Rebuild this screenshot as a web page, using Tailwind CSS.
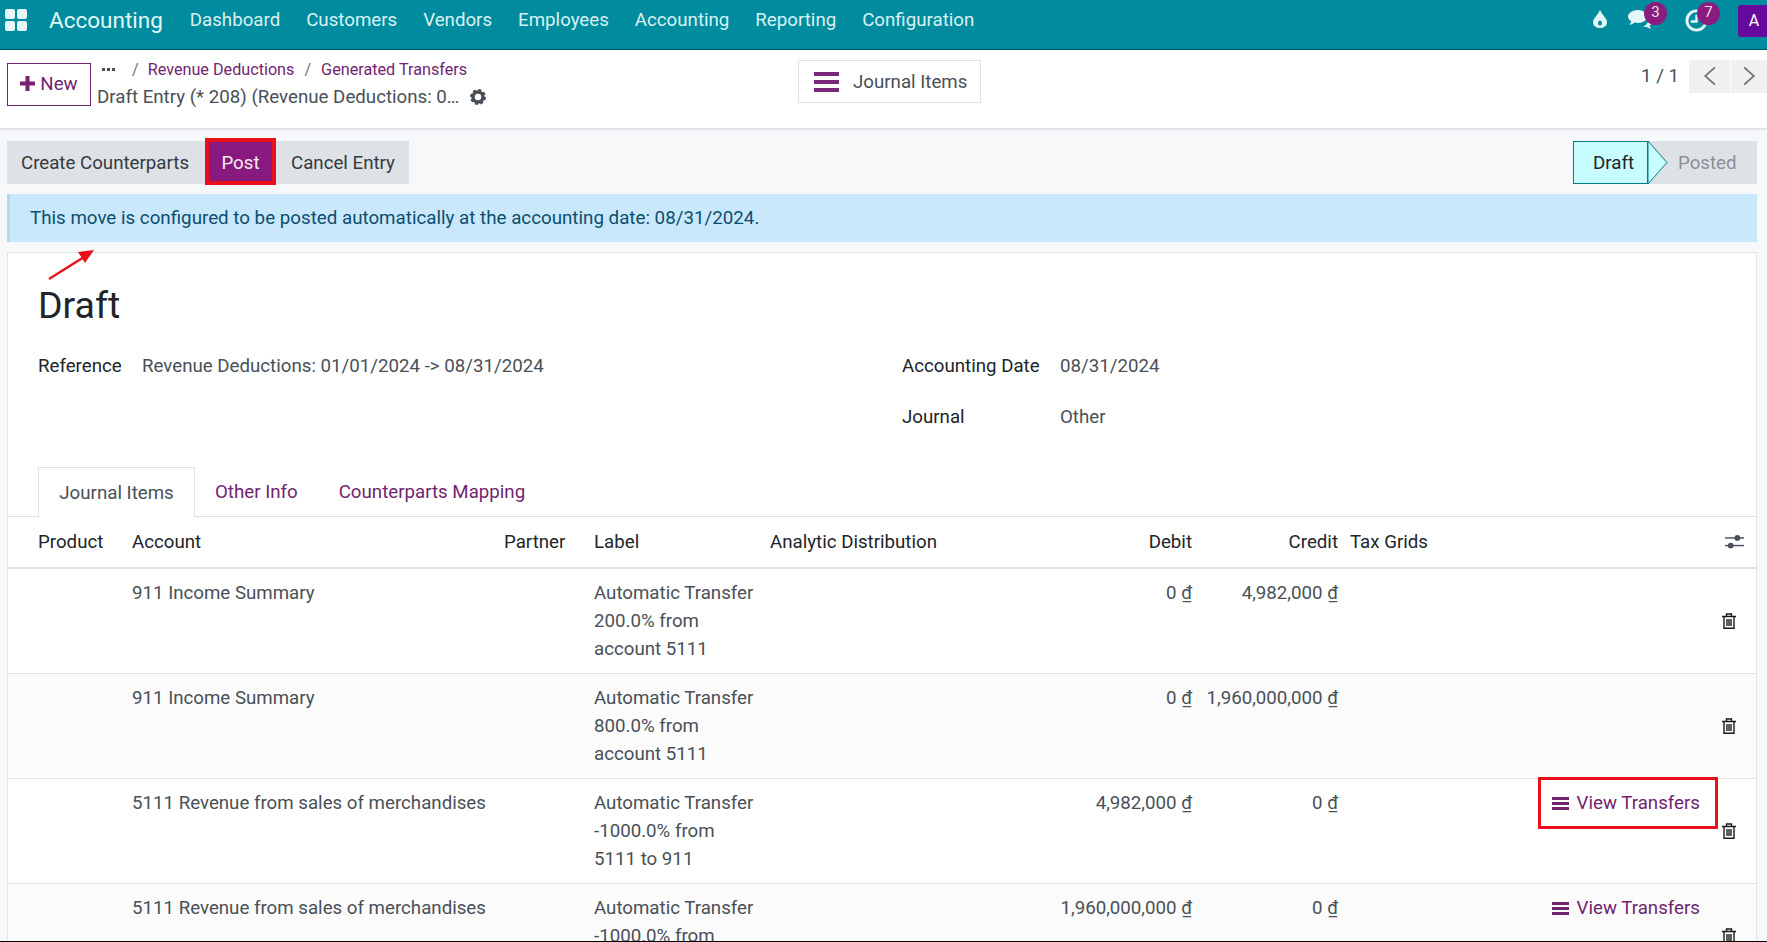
<!DOCTYPE html>
<html lang="en">
  <head>
    <meta charset="UTF-8" />
    <title>Draft Entry</title>
    <script src="https://cdn.jsdelivr.net/npm/@tailwindcss/browser@4"></script>
  </head>
  <body class="m-0 bg-[#f7f8fa]">
    <div class="relative h-[942px] w-[1767px] overflow-hidden border-b border-black font-['Roboto',sans-serif] text-[18.7px] leading-[28px] text-[#495057]">
      <!-- top nav -->
      <header class="flex h-[50px] items-start border-b border-[#00565f] bg-[#008c9e] text-white/90">
        <svg class="ml-[5px] mt-[9px] h-[22px] w-[22px]" viewBox="0 0 22 22" fill="#e3f7f8">
          <rect x="0" y="0" width="10" height="10" rx="2" /><rect x="12" y="0" width="10" height="10" rx="2" />
          <rect x="0" y="12" width="10" height="10" rx="2" /><rect x="12" y="12" width="10" height="10" rx="2" />
        </svg>
        <div class="ml-[22px] mt-[4px] text-[22.5px] leading-[32px] text-[#e3f7f8]">Accounting</div>
        <nav class="ml-[14px] mt-[6px] flex text-[#d9f1f3]">
          <a class="px-[13px]">Dashboard</a>
          <a class="px-[13px]">Customers</a>
          <a class="px-[13px]">Vendors</a>
          <a class="px-[13px]">Employees</a>
          <a class="px-[13px]">Accounting</a>
          <a class="px-[13px]">Reporting</a>
          <a class="px-[13px]">Configuration</a>
        </nav>
        <div class="relative ml-auto flex h-[49px] w-[175px] items-start">
          <svg class="ml-px mt-[10px] h-[18px] w-[14px]" viewBox="0 0 14 18" fill="#e3f7f8">
            <path fill-rule="evenodd" d="M7 0C9 5 14 8 14 12.5A7 5.500 0 0 1 0 12.500C0 8 5 5 7 0ZM7 10.500A2 2.500 0 1 0 7 15.500A2 2.500 0 1 0 7 10.500Z" />
          </svg>
          <svg class="ml-[21px] mt-[10px] h-[20px] w-[24px]" viewBox="0 0 24 20" fill="#e3f7f8">
            <path d="M10 0C15.500 0 19 3 19 6.500S15.500 13 10 13C8.800 13 7.800 12.900 6.800 12.600C5.500 13.800 3.500 14.800 1 15C2.300 13.700 3 12.500 3.200 11.300C1.200 10 0 8.400 0 6.500C0 3 4.500 0 10 0Z" />
            <path d="M20.500 7.500C22.600 8.500 24 10 24 12C24 13.500 23 14.800 21.500 15.700C21.700 16.800 22.500 17.800 23.500 18.800C21.500 18.600 19.800 17.700 18.700 16.800C17.500 17 16 17 14.800 16.600C18 15.800 20.800 12.800 20.500 7.500Z" />
          </svg>
          <span class="absolute left-[52px] top-[2px] flex h-[23px] w-[23px] items-center justify-center rounded-full bg-[#8a1c7e] pb-[3px] text-[15px] leading-none text-[#f0dcec]">3</span>
          <svg class="ml-[33px] mt-[9px] h-[23px] w-[23px]" viewBox="0 0 24 24" fill="none" stroke="#e3f7f8" stroke-width="3">
            <circle cx="12" cy="12" r="10" />
            <path d="M12 6V13H6" stroke-width="2.500" />
          </svg>
          <span class="absolute left-[105px] top-[2px] flex h-[23px] w-[23px] items-center justify-center rounded-full bg-[#8a1c7e] pb-[3px] text-[15px] leading-none text-[#f0dcec]">7</span>
          <span class="absolute left-[146px] top-[5px] flex h-[32px] w-[32px] items-center justify-center rounded-[3px] bg-[#650a9c] text-[16px] leading-none text-white">A</span>
        </div>
      </header>

      <!-- control panel -->
      <section class="relative flex h-[80px] border-b-2 border-[#e1e3e6] bg-white">
        <button class="ml-[7px] mt-[13px] flex h-[43px] w-[84px] items-center justify-center gap-[5px] border border-[#71256f] pb-[2px] text-[#71256f]">
          <svg class="h-[15px] w-[15px]" viewBox="0 0 15 15" fill="#7a1f73"><path d="M5.500 0H9.500V5.500H15V9.500H9.500V15H5.500V9.500H0V5.500H5.500Z" /></svg>
          New
        </button>
        <div class="ml-[6px] mt-[5px]">
          <div class="flex h-[28px] items-center pt-px text-[16.2px] text-[#71256f]">
            <span class="ml-[5px] flex w-[13px] gap-[2px]"><i class="h-[3px] w-[3px] bg-[#495057]"></i><i class="h-[3px] w-[3px] bg-[#495057]"></i><i class="h-[3px] w-[3px] bg-[#495057]"></i></span>
            <span class="ml-[17px] mr-[9px] text-[#6c757d]">/</span>
            <span>Revenue Deductions</span>
            <span class="mx-[10px] text-[#6c757d]">/</span>
            <span>Generated Transfers</span>
          </div>
          <div class="flex h-[28px] items-center">
            <span>Draft Entry (* 208) (Revenue Deductions: 0…</span>
            <svg class="ml-[11px] h-[16px] w-[16px]" viewBox="0 0 16 16">
              <circle cx="8" cy="8" r="5" fill="none" stroke="#495057" stroke-width="3.500" />
              <circle cx="8" cy="8" r="6.800" fill="none" stroke="#495057" stroke-width="2.400" stroke-dasharray="3 2.340" />
            </svg>
          </div>
        </div>
        <button class="absolute left-[798px] top-[10px] flex h-[43px] w-[183px] items-center border border-[#dee2e6] pl-[15px]">
          <span class="flex w-[25px] flex-col gap-[4px]"><i class="h-[4px] bg-[#7a2877]"></i><i class="h-[4px] bg-[#7a2877]"></i><i class="h-[4px] bg-[#7a2877]"></i></span>
          <span class="ml-[14px]">Journal Items</span>
        </button>
        <div class="ml-auto mt-[9px] flex h-[33px] items-center">
          <span class="mr-[10px]">1 / 1</span>
          <button class="mt-px flex h-[33px] w-[41px] items-center justify-center bg-[#f0f0f1]">
            <svg class="h-[20px] w-[13px]" viewBox="0 0 12 18" fill="none" stroke="#6c757d" stroke-width="1.600"><path d="M11 1L2 9L11 17" /></svg>
          </button>
          <button class="ml-px mt-px flex h-[33px] w-[36px] items-center justify-center bg-[#f0f0f1]">
            <svg class="h-[20px] w-[13px]" viewBox="0 0 12 18" fill="none" stroke="#6c757d" stroke-width="1.600"><path d="M1 1L10 9L1 17" /></svg>
          </button>
        </div>
      </section>

      <!-- action bar -->
      <div class="mt-[11px] flex h-[43px] justify-between pl-[7px] pr-[10px]">
        <div class="flex bg-[#dee2e6] text-[#343a40]">
          <button class="w-[199px] pr-[3px] text-center">Create Counterparts</button>
          <button class="relative w-[69px] border border-white bg-[#881a7f] text-[#f6eaf5]">
            Post
            <span class="absolute -bottom-[2px] -left-[2px] -right-[2px] -top-[4px] border-[4px] border-[#e8101a]"></span>
          </button>
          <button class="w-[134px] pl-[2px] text-center">Cancel Entry</button>
        </div>
        <div class="relative flex h-[43px] w-[184px] bg-[#dee2e6]">
          <div class="flex w-[75px] items-center justify-center border border-[#017e84] bg-[#c8fdff] pl-[6px] text-[#212529]">Draft</div>
          <svg class="h-[43px] w-[20px]" viewBox="0 0 20 43"><path d="M0 0L19 21.500L0 43Z" fill="#c8fdff" stroke="#017e84" /></svg>
          <span class="ml-[10px] self-center text-[#8a9097]">Posted</span>
        </div>
      </div>

      <!-- alert -->
      <div class="ml-[7px] mr-[10px] mt-[10px] flex h-[48px] items-center border-l-[3px] border-[#b2d9ec] bg-[#c9e8fb] pl-[20px] text-[18.76px] text-[#0d4e6f]">
        This move is configured to be posted automatically at the accounting date: 08/31/2024.
      </div>

      <!-- form sheet -->
      <main class="ml-[7px] mr-[10px] mt-[10px] border border-[#e1e3e6] bg-white">
        <h1 class="ml-[30px] mt-[30px] text-[37.5px] leading-[44px] text-[#212529]">Draft</h1>
        <div class="mt-[25px] grid grid-cols-[864px_1fr] pl-[30px]">
          <div class="flex">
            <span class="w-[104px] text-[#212529]">Reference</span>
            <span>Revenue Deductions: 01/01/2024 -&gt; 08/31/2024</span>
          </div>
          <div>
            <div class="flex">
              <span class="w-[158px] text-[#212529]">Accounting Date</span>
              <span>08/31/2024</span>
            </div>
            <div class="mt-[23px] flex">
              <span class="w-[158px] text-[#212529]">Journal</span>
              <span>Other</span>
            </div>
          </div>
        </div>

        <div class="mt-[36px] flex h-[50px] border-b border-[#dee2e6] pl-[30px]">
          <a class="flex h-[50px] w-[157px] items-center justify-center border border-b-0 border-[#dee2e6] bg-white">Journal Items</a>
          <a class="ml-[20px] flex items-center text-[#71256f]">Other Info</a>
          <a class="ml-[41px] flex items-center text-[#71256f]">Counterparts Mapping</a>
        </div>

        <table class="w-full table-fixed border-collapse">
          <colgroup>
            <col class="w-[119px]" /><col class="w-[372px]" /><col class="w-[90px]" /><col class="w-[176px]" />
            <col class="w-[286px]" /><col class="w-[146px]" /><col class="w-[146px]" /><col class="w-[187px]" /><col class="w-[187px]" /><col />
          </colgroup>
          <thead class="text-[#212529]">
            <tr class="h-[51px] border-b-2 border-[#dfe1e6] text-left">
              <th class="pl-[30px] font-normal">Product</th>
              <th class="px-[5px] font-normal">Account</th>
              <th class="px-[5px] font-normal">Partner</th>
              <th class="px-[5px] font-normal">Label</th>
              <th class="px-[5px] font-normal">Analytic Distribution</th>
              <th class="px-[5px] text-right font-normal">Debit</th>
              <th class="px-[5px] text-right font-normal">Credit</th>
              <th class="pl-[7px] font-normal">Tax Grids</th>
              <th colspan="2" class="font-normal">
                <svg class="ml-auto mr-[12px] h-[16px] w-[19px]" viewBox="0 0 20 16" fill="#495057">
                  <rect x="0" y="3" width="20" height="1.500" /><rect x="0" y="11" width="20" height="1.500" />
                  <circle cx="13" cy="3.700" r="3" /><circle cx="6" cy="11.700" r="3" />
                </svg>
              </th>
            </tr>
          </thead>
          <tbody class="align-top">
            <tr class="border-b border-[#dee2e6]">
              <td class="py-[10px]"></td>
              <td class="px-[5px] py-[10px]">911 Income Summary</td>
              <td></td>
              <td class="px-[5px] py-[10px]">Automatic Transfer<br />200.0% from<br />account 5111</td>
              <td></td>
              <td class="px-[5px] py-[10px] text-right">0 ₫</td>
              <td class="px-[5px] py-[10px] text-right">4,982,000 ₫</td>
              <td colspan="2"></td>
              <td class="align-middle">
                <svg class="ml-[5px] h-[16px] w-[14px]" viewBox="0 0 14 16" fill="none" stroke="#1a1a1a" stroke-width="1.400"><path d="M0 3.500H14M4.500 3.500V1H9.500V3.500M2 3.500V15.300H12V3.500M5 6V13M7 6V13M9 6V13" /></svg>
              </td>
            </tr>
            <tr class="border-b border-[#dee2e6] bg-[#fbfbfc]">
              <td class="py-[10px]"></td>
              <td class="px-[5px] py-[10px]">911 Income Summary</td>
              <td></td>
              <td class="px-[5px] py-[10px]">Automatic Transfer<br />800.0% from<br />account 5111</td>
              <td></td>
              <td class="px-[5px] py-[10px] text-right">0 ₫</td>
              <td class="px-[5px] py-[10px] text-right">1,960,000,000 ₫</td>
              <td colspan="2"></td>
              <td class="align-middle">
                <svg class="ml-[5px] h-[16px] w-[14px]" viewBox="0 0 14 16" fill="none" stroke="#1a1a1a" stroke-width="1.400"><path d="M0 3.500H14M4.500 3.500V1H9.500V3.500M2 3.500V15.300H12V3.500M5 6V13M7 6V13M9 6V13" /></svg>
              </td>
            </tr>
            <tr class="border-b border-[#dee2e6]">
              <td class="py-[10px]"></td>
              <td class="px-[5px] py-[10px]">5111 Revenue from sales of merchandises</td>
              <td></td>
              <td class="px-[5px] py-[10px]">Automatic Transfer<br />-1000.0% from<br />5111 to 911</td>
              <td></td>
              <td class="px-[5px] py-[10px] text-right">4,982,000 ₫</td>
              <td class="px-[5px] py-[10px] text-right">0 ₫</td>
              <td></td>
              <td class="py-[10px] pr-[17px] text-right text-[#71256f]">
                <span class="relative inline-flex items-center gap-[8px] align-top">
                  <span class="flex w-[17px] flex-col gap-[2px]"><i class="h-[3px] bg-[#71256f]"></i><i class="h-[3px] bg-[#71256f]"></i><i class="h-[3px] bg-[#71256f]"></i></span>
                  View Transfers
                  <span class="absolute -bottom-[12px] -left-[14px] -right-[18px] -top-[12px] border-[3px] border-[#e8101a]"></span>
                </span>
              </td>
              <td class="align-middle">
                <svg class="ml-[5px] h-[16px] w-[14px]" viewBox="0 0 14 16" fill="none" stroke="#1a1a1a" stroke-width="1.400"><path d="M0 3.500H14M4.500 3.500V1H9.500V3.500M2 3.500V15.300H12V3.500M5 6V13M7 6V13M9 6V13" /></svg>
              </td>
            </tr>
            <tr class="border-b border-[#dee2e6] bg-[#fbfbfc]">
              <td class="py-[10px]"></td>
              <td class="px-[5px] py-[10px]">5111 Revenue from sales of merchandises</td>
              <td></td>
              <td class="px-[5px] py-[10px]">Automatic Transfer<br />-1000.0% from<br />5111 to 911</td>
              <td></td>
              <td class="px-[5px] py-[10px] text-right">1,960,000,000 ₫</td>
              <td class="px-[5px] py-[10px] text-right">0 ₫</td>
              <td></td>
              <td class="py-[10px] pr-[17px] text-right text-[#71256f]">
                <span class="inline-flex items-center gap-[8px] align-top">
                  <span class="flex w-[17px] flex-col gap-[2px]"><i class="h-[3px] bg-[#71256f]"></i><i class="h-[3px] bg-[#71256f]"></i><i class="h-[3px] bg-[#71256f]"></i></span>
                  View Transfers
                </span>
              </td>
              <td class="align-middle">
                <svg class="ml-[5px] h-[16px] w-[14px]" viewBox="0 0 14 16" fill="none" stroke="#1a1a1a" stroke-width="1.400"><path d="M0 3.500H14M4.500 3.500V1H9.500V3.500M2 3.500V15.300H12V3.500M5 6V13M7 6V13M9 6V13" /></svg>
              </td>
            </tr>
          </tbody>
        </table>
      </main>

      <!-- red annotation arrow -->
      <svg class="absolute left-[45px] top-[245px] h-[38px] w-[54px]" viewBox="0 0 54 38" fill="#e8101a">
        <path d="M4 34L39 12" stroke="#e8101a" stroke-width="2.400" />
        <path d="M49 5L33 7L40 18Z" />
      </svg>
    </div>
  </body>
</html>
